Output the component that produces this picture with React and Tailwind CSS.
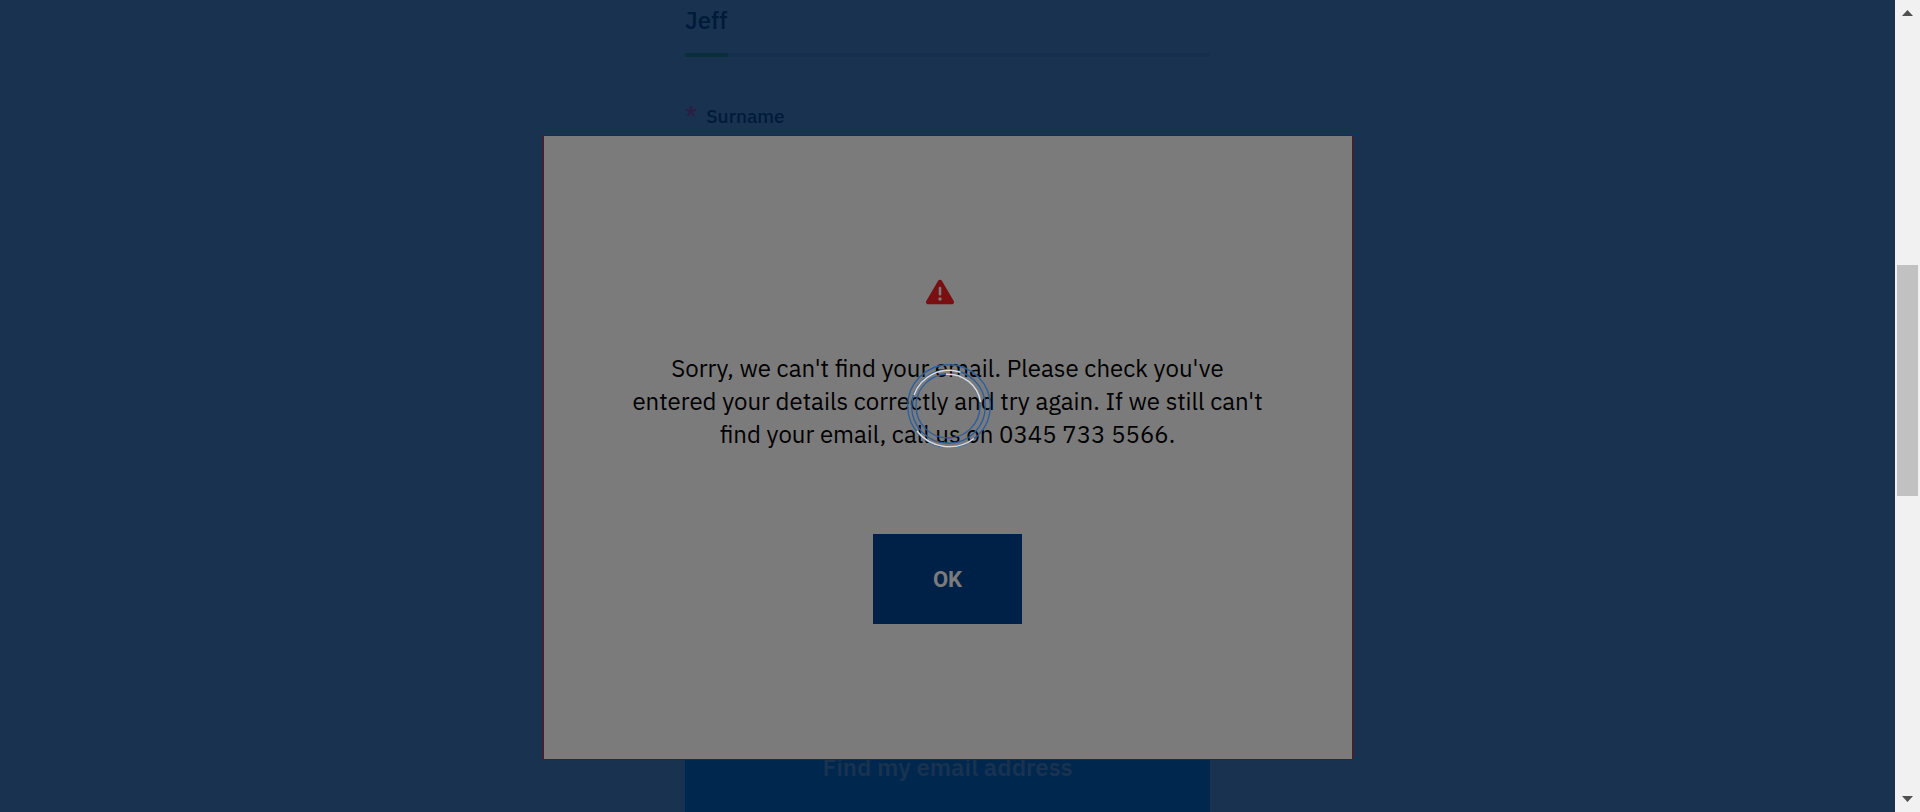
import { FaTriangleExclamation } from "react-icons/fa6";

function Field({ label, value }) {
  return (
    <div className="relative">
      <input
        aria-label={label}
        defaultValue={value}
        className="block h-[57px] w-full border-b-4 border-[#172f4e] bg-transparent pb-[14px] text-2xl font-medium text-[#001a3a] outline-none"
      />
      <span className="absolute bottom-0 left-0 h-1 w-[43px] bg-[#0a2f3c]" />
    </div>
  );
}

function Spinner() {
  return (
    <svg viewBox="0 0 90 90" className="absolute top-1/2 left-1/2 size-[90px] -translate-x-1/2 -translate-y-1/2" fill="none" role="img" aria-label="Loading">
      <g stroke="#2c5f9f" strokeWidth="1.4">
        <circle cx="46" cy="45" r="41.3" />
        <circle cx="45.5" cy="45.5" r="36.8" />
        <circle cx="45" cy="45" r="32" />
      </g>
      <g stroke="#dcdcdc" strokeWidth="1.5">
        <path d="M11 34A37 37 0 0 1 57.5 11.3" />
        <path d="M43 13.2A33 33 0 0 1 77.5 41" />
        <path d="M14 70A41 41 0 0 0 71 77.5" />
      </g>
    </svg>
  );
}

function Scrollbar() {
  return (
    <div className="flex w-[25px] shrink-0 flex-col items-center bg-[#f1f1f1]" aria-hidden="true">
      <svg viewBox="0 0 11 6" className="mt-[10px] h-[6px] w-[11px]" fill="#505050"><path d="M5.5 0L11 6H0z" /></svg>
      <div className="grow-[249]" />
      <div className="w-[21px] grow-[231] bg-[#c1c1c1]" />
      <div className="grow-[300]" />
      <svg viewBox="0 0 11 6" className="mb-[10px] h-[6px] w-[11px]" fill="#505050"><path d="M0 0H11L5.5 6z" /></svg>
    </div>
  );
}

export default function App() {
  return (
    <div className="flex h-screen overflow-hidden font-['IBM_Plex_Sans','Roboto',sans-serif]">
      <main className="relative min-w-0 flex-1 overflow-hidden bg-[#183250]">
        <form className="mx-auto flex h-full w-full max-w-[525px] flex-col" onSubmit={(e) => e.preventDefault()}>
          <Field label="First name" value="Jeff" />
          <label htmlFor="surname" className="mt-11 flex items-baseline gap-[9px] text-[19px] leading-7 font-medium text-[#001a3a]">
            <span className="text-[22px] leading-7 font-semibold text-[#2c1e42]">*</span>Surname
          </label>
          <input id="surname" className="h-12 bg-transparent" />
          <button className="mt-auto h-[90px] shrink-0 bg-[#00284f] text-2xl font-semibold text-[#183250]">
            Find my email address
          </button>
        </form>
        <div className="absolute inset-0 flex justify-center pt-[135px]">
          <section role="alertdialog" aria-modal="true" className="flex h-[625px] w-full max-w-[810px] flex-col items-center border border-[#6b0f10] bg-[#7b7b7b] px-20 pt-[142px] text-center">
            <FaTriangleExclamation className="mr-4 size-7 text-[#790f10]" />
            <p className="mt-[46px] max-w-[636px] text-2xl leading-[33px] text-black">
              Sorry, we can't find your email. Please check you've entered your details correctly and try again. If we still can't find your email, call us on 0345 733 5566.
            </p>
            <button className="mt-[83px] h-[90px] w-[149px] bg-[#002147] font-['Roboto',sans-serif] text-[22px] font-bold text-[#7b7b7b]">OK</button>
          </section>
        </div>
        <Spinner />
      </main>
      <Scrollbar />
    </div>
  );
}
